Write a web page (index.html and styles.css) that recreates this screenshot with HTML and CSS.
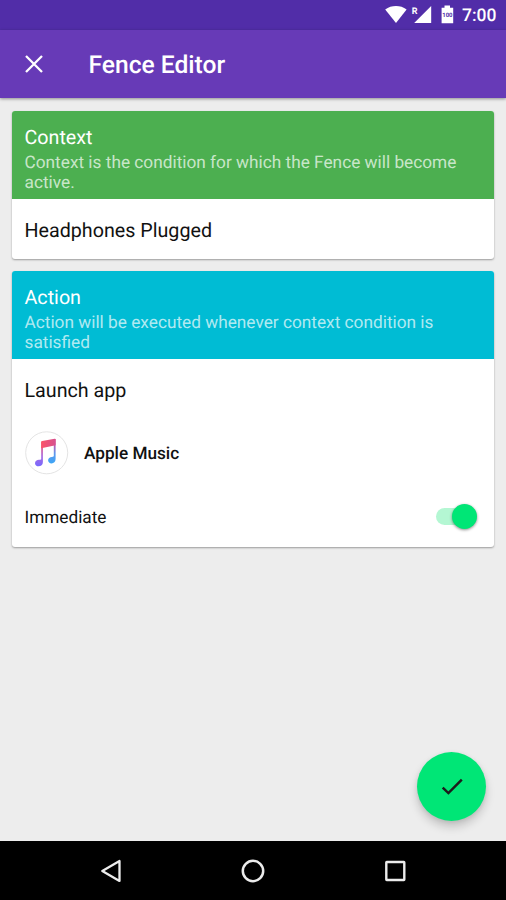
FILE: index.html
```html
<!DOCTYPE html>
<html lang="en">
<head>
<meta charset="utf-8">
<title>Fence Editor</title>
<link rel="stylesheet" href="styles.css">
</head>
<body>
<div class="screen">
  <div class="status">
    <svg class="status-icons" width="80" height="30" viewBox="0 0 80 30">
      <path fill="#fff" d="M.2 9.400C6.500 4.800 15.500 4.800 21.600 9.400L11 22.900Z"/>
      <path fill="#fff" d="M46.200 6V23H29.200Z"/>
      <path fill="#fff" d="M59.500 5.500h5.500v2.200h3.200v15.600H56.600V7.700h2.900z"/>
      <text class="roam" x="26.700" y="13.500">R</text>
      <text class="level" x="62.400" y="17.200" text-anchor="middle">100</text>
    </svg>
    <span class="clock">7:00</span>
  </div>
  <header class="appbar">
    <svg class="close" width="20" height="20" viewBox="0 0 20 20"><path d="M2 2 18 18M18 2 2 18" stroke="#fff" stroke-width="2.300"/></svg>
    <h1 class="title">Fence Editor</h1>
  </header>
  <main class="content">
    <section class="card">
      <div class="card-head green">
        <h2>Context</h2>
        <p>Context is the condition for which the Fence will become active.</p>
      </div>
      <div class="row">Headphones Plugged</div>
    </section>
    <section class="card">
      <div class="card-head cyan">
        <h2>Action</h2>
        <p>Action will be executed whenever context condition is satisfied</p>
      </div>
      <div class="row">Launch app</div>
      <div class="app-row">
        <svg class="app-icon" width="44" height="44" viewBox="0 0 44 44">
          <defs>
            <linearGradient id="note" x1="0" y1="0" x2="0" y2="1">
              <stop offset="0" stop-color="#f9576b"/><stop offset=".25" stop-color="#dc5790"/><stop offset=".6" stop-color="#a86be0"/><stop offset="1" stop-color="#7668ff"/>
            </linearGradient>
            <linearGradient id="stem" gradientUnits="userSpaceOnUse" x1="0" y1="8" x2="0" y2="32">
              <stop offset="0" stop-color="#e3518a"/><stop offset=".3" stop-color="#b45fb8"/><stop offset=".6" stop-color="#5d98ee"/><stop offset="1" stop-color="#3ea5f5"/>
            </linearGradient>
            <linearGradient id="beam" x1="0" y1="0" x2="1" y2="0">
              <stop offset="0" stop-color="#fb5368"/><stop offset="1" stop-color="#d7518f"/>
            </linearGradient>
          </defs>
          <circle cx="21.700" cy="21.800" r="21" fill="#fff" stroke="#e4e4e4"/>
          <g transform="translate(-.5 0)">
            <path fill="url(#note)" d="M16.700 10.500h1.700V31c0 2.900-2 4.300-4.300 4.300-2 0-3.600-1.200-3.600-3.100 0-2.200 1.800-3.500 4-3.500.9 0 1.700-.1 2.200-.5z"/>
            <path fill="url(#stem)" d="M29.300 8h1.800v20c0 2.900-1.900 4.400-4 4.400-2 0-3.500-1.200-3.500-3.100 0-2 1.700-3.400 3.700-3.400.8 0 1.500-.1 2-.6z"/>
            <path fill="url(#beam)" d="M16.700 11.300q0-1 1-1.200L30.100 7.700q1-.2 1 .7v5.900L16.700 17.200z"/>
          </g>
        </svg>
        <span class="app-name">Apple Music</span>
      </div>
      <div class="toggle-row">
        <span class="toggle-label">Immediate</span>
        <span class="switch"><span class="thumb"></span></span>
      </div>
    </section>
  </main>
  <div class="fab"><svg width="24" height="20" viewBox="0 0 24 20"><path d="M2.700 10.700 8.400 16.100 21.800 2.700" fill="none" stroke="#1c1c1c" stroke-width="2.500"/></svg></div>
  <nav class="navbar">
    <svg width="22" height="26" viewBox="0 0 22 26"><path d="M19.500 3V22.900L2.300 12.900Z" fill="none" stroke="#ececec" stroke-width="2.300" stroke-linejoin="round"/></svg>
    <svg width="26" height="26" viewBox="0 0 26 26"><circle cx="13" cy="13" r="10.200" fill="none" stroke="#ececec" stroke-width="2.500"/></svg>
    <svg width="22" height="22" viewBox="0 0 22 22"><rect x="2.300" y="2" width="18" height="18" rx=".4" fill="none" stroke="#ececec" stroke-width="2.400" stroke-linejoin="round"/></svg>
  </nav>
</div>
</body>
</html>
```
FILE: styles.css
```css
* { box-sizing: border-box; }
body { margin: 0; font-family: Roboto, "Liberation Sans", sans-serif; color: #111; text-rendering: geometricPrecision; }
h1, h2, p { margin: 0; font-weight: 400; }
svg { display: block; flex: none; }
.screen { position: relative; width: 506px; height: 900px; display: flex; flex-direction: column; background: #ededed; overflow: hidden; }
.status { height: 30px; flex: none; display: flex; justify-content: flex-end; padding-right: 9px; background: #512da8; color: #fff; }
.status-icons { margin-right: -3px; }
.roam { font-size: 9px; font-weight: 700; fill: #fff; }
.level { font-size: 6px; font-weight: 700; fill: #512da8; }
.clock { width: 35px; font-size: 17.500px; font-weight: 500; line-height: 33px; white-space: nowrap; }
.appbar { height: 68px; flex: none; display: flex; align-items: center; padding-left: 24px; background: #673ab7; box-shadow: 0 1px 3px rgba(0,0,0,.4); }
.title { margin-left: 44.500px; font-size: 24.600px; font-weight: 500; line-height: 30px; color: #fff; padding-top: 4px; }
.content { flex: 1; display: flex; flex-direction: column; gap: 12px; padding: 13px 12px; }
.card { background: #fff; border-radius: 3px; box-shadow: 0 1px 2px rgba(0,0,0,.35); }
.card-head { height: 88px; padding: 14px 12.500px 0; border-radius: 3px 3px 0 0; }
.green { background: #4caf50; }
.cyan { background: #00bcd4; }
.card-head h2 { font-size: 19.700px; line-height: 26px; color: #fff; }
.card-head p { font-size: 17.250px; line-height: 20px; color: rgba(255,255,255,.7); padding-top: 2px; }
.row { height: 60px; padding-left: 12.500px; font-size: 19.700px; line-height: 63px; }
.app-row { height: 68px; display: flex; align-items: center; padding-left: 12.500px; }
.app-name { margin-left: 15.500px; padding-top: 2px; font-size: 17.200px; font-weight: 500; }
.toggle-row { height: 59.500px; display: flex; align-items: center; justify-content: space-between; padding: 0 17px 0 12.500px; font-size: 17.200px; }
.toggle-label { padding-top: 2px; }
.switch { width: 41px; height: 17px; display: flex; align-items: center; justify-content: flex-end; border-radius: 9px; background: linear-gradient(90deg, #b4f7d3 28px, transparent 28px); }
.thumb { width: 25px; height: 25px; border-radius: 50%; background: #00e676; box-shadow: 0 1px 3px rgba(0,0,0,.45); }
.fab { position: absolute; left: 417px; top: 752px; width: 69px; height: 69px; display: flex; align-items: center; justify-content: center; border-radius: 50%; background: #00e676; box-shadow: 0 6px 10px rgba(0,0,0,.18), 0 1px 4px rgba(0,0,0,.08); }
.navbar { height: 59px; flex: none; display: flex; align-items: center; justify-content: space-between; padding: 0 100px; background: #000; }
```
